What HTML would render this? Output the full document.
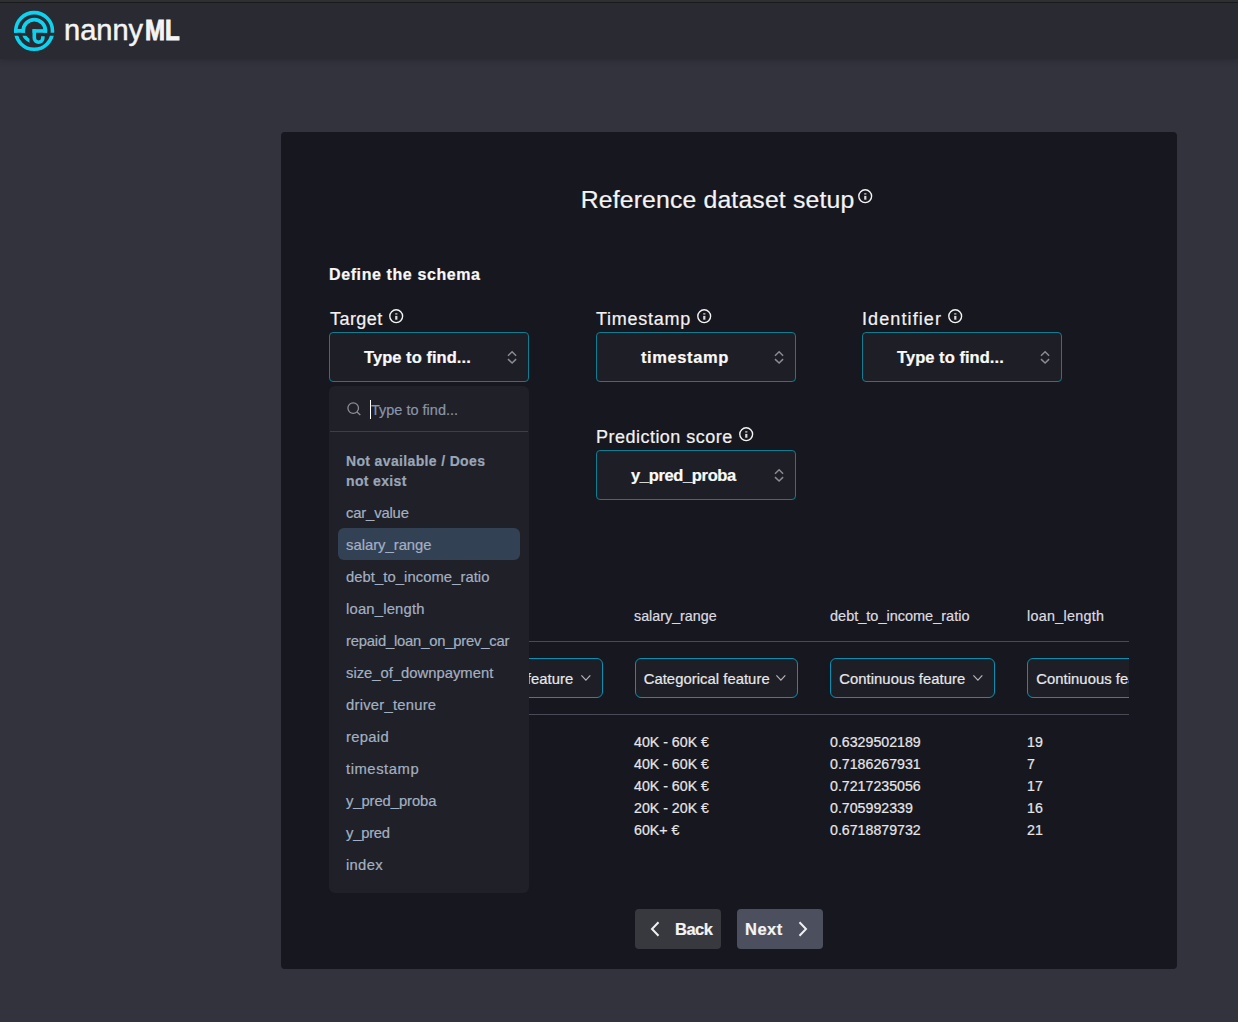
<!DOCTYPE html>
<html><head><meta charset="utf-8">
<style>
*{box-sizing:border-box;margin:0;padding:0}
html,body{width:1238px;height:1022px;overflow:hidden;background:#33333e;font-family:"Liberation Sans",sans-serif;}
.abs{position:absolute;white-space:nowrap;line-height:1;-webkit-text-stroke:0.2px currentColor}
#topstrip{position:absolute;left:0;top:0;width:1238px;height:3px;background:#2e3235;border-bottom:1px solid #1b1b1d}
#header{position:absolute;left:0;top:3px;width:1238px;height:56px;background:#2a2a33;box-shadow:0 2px 6px rgba(0,0,0,0.18)}
#card{position:absolute;left:281px;top:132px;width:896px;height:837px;background:#17171f;border-radius:4px}
.info{position:absolute;width:14px;height:14px}
.sel{position:absolute;width:200px;height:50px;border:1px solid #0f7d92;border-radius:4px;background:#1e1f26}
.hline{position:absolute;height:1px;background:#4a4a56}
.fsel{position:absolute;height:40px;border:1px solid #0891b2;border-radius:6px;background:#1e1f26;overflow:hidden}
#dd{position:absolute;left:329px;top:386px;width:200px;height:507px;background:#1f2028;border-radius:6px}
.btn{position:absolute;top:909px;height:40px;border-radius:4px}
</style></head>
<body>
<div id="topstrip"></div>
<div id="header">
<svg style="position:absolute;left:10px;top:5px" width="50" height="46" viewBox="0 0 1111 1022">
<defs>
<clipPath id="cu"><rect x="0" y="0" width="1111" height="550"/></clipPath>
<clipPath id="cl"><rect x="0" y="615" width="1111" height="500"/></clipPath>
<clipPath id="cd"><rect x="0" y="615" width="432" height="200"/></clipPath>
</defs>
<g fill="none" stroke="#0cd3ef" stroke-width="80">
<circle cx="536" cy="510" r="408" clip-path="url(#cu)"/>
<circle cx="536" cy="510" r="408" clip-path="url(#cl)"/>
<circle cx="540" cy="505" r="247" clip-path="url(#cu)"/>
<circle cx="540" cy="505" r="247" clip-path="url(#cd)"/>
<path d="M540 470 V665 A95 95 0 0 0 730 665 V625"/>
</g>
<g fill="#0cd3ef">
<rect x="88" y="465" width="242" height="85"/>
<rect x="500" y="470" width="325" height="80"/>
</g>
</svg>
<div class="abs" style="left:64px;top:12.5px;font-size:29px;color:#f4f4f4;-webkit-text-stroke:0.5px #f4f4f4">nanny<b style="display:inline-block;transform:scaleX(0.83);transform-origin:0 0;margin-left:2px;-webkit-text-stroke:0.9px #f4f4f4">ML</b></div>
</div>
<div id="card"></div>
<div class="abs" style="left:580.7px;top:187.92px;font-size:24.8px;color:#f4f4f4;font-weight:400;letter-spacing:0.15px;">Reference dataset setup</div>
<svg class="info" style="left:856.5px;top:187.7px;width:16px;height:16px" viewBox="0 0 16 16"><circle cx="8.2" cy="8.2" r="6.4" fill="none" stroke="#f4f4f4" stroke-width="1.4"/><rect x="7.2" y="5.3" width="2.2" height="1.2" fill="#dcdcdc"/><rect x="7.2" y="7.9" width="2.2" height="3.8" fill="#dcdcdc"/></svg>
<div class="abs" style="left:329px;top:267.40px;font-size:16px;color:#f8f8f8;font-weight:700;letter-spacing:0.6px;">Define the schema</div>
<div class="abs" style="left:330px;top:309.70px;font-size:18px;color:#f2f2f2;font-weight:400;letter-spacing:0.45px;">Target</div>
<svg class="info" style="left:387.6px;top:307.6px;width:16px;height:16px" viewBox="0 0 16 16"><circle cx="8.2" cy="8.2" r="6.4" fill="none" stroke="#f4f4f4" stroke-width="1.4"/><rect x="7.2" y="5.3" width="2.2" height="1.2" fill="#dcdcdc"/><rect x="7.2" y="7.9" width="2.2" height="3.8" fill="#dcdcdc"/></svg>
<div class="abs" style="left:596px;top:309.70px;font-size:18px;color:#f2f2f2;font-weight:400;letter-spacing:0.75px;">Timestamp</div>
<svg class="info" style="left:695.6px;top:307.6px;width:16px;height:16px" viewBox="0 0 16 16"><circle cx="8.2" cy="8.2" r="6.4" fill="none" stroke="#f4f4f4" stroke-width="1.4"/><rect x="7.2" y="5.3" width="2.2" height="1.2" fill="#dcdcdc"/><rect x="7.2" y="7.9" width="2.2" height="3.8" fill="#dcdcdc"/></svg>
<div class="abs" style="left:862px;top:309.70px;font-size:18px;color:#f2f2f2;font-weight:400;letter-spacing:1.1px;">Identifier</div>
<svg class="info" style="left:947.2px;top:307.6px;width:16px;height:16px" viewBox="0 0 16 16"><circle cx="8.2" cy="8.2" r="6.4" fill="none" stroke="#f4f4f4" stroke-width="1.4"/><rect x="7.2" y="5.3" width="2.2" height="1.2" fill="#dcdcdc"/><rect x="7.2" y="7.9" width="2.2" height="3.8" fill="#dcdcdc"/></svg>
<div class="abs" style="left:596px;top:427.70px;font-size:18px;color:#f2f2f2;font-weight:400;letter-spacing:0.48px;">Prediction score</div>
<svg class="info" style="left:737.9px;top:425.6px;width:16px;height:16px" viewBox="0 0 16 16"><circle cx="8.2" cy="8.2" r="6.4" fill="none" stroke="#f4f4f4" stroke-width="1.4"/><rect x="7.2" y="5.3" width="2.2" height="1.2" fill="#dcdcdc"/><rect x="7.2" y="7.9" width="2.2" height="3.8" fill="#dcdcdc"/></svg>
<div class="sel" style="left:329px;top:332px"></div>
<div class="abs" style="left:364px;top:348.98px;font-size:16.5px;color:#fafafa;font-weight:700;letter-spacing:0.05px;">Type to find...</div>
<svg style="position:absolute;left:505.6px;top:349.5px" width="13" height="16" viewBox="0 0 13 16"><g fill="none" stroke="#8b8b93" stroke-width="1.5"><path d="M2 5.7 L6.1 1.8 L10.1 5.7"/><path d="M2 9.1 L6.1 13 L10.1 9.1"/></g></svg>
<div class="sel" style="left:596px;top:332px"></div>
<div class="abs" style="left:641px;top:348.98px;font-size:16.5px;color:#fafafa;font-weight:700;letter-spacing:0.6px;">timestamp</div>
<svg style="position:absolute;left:772.6px;top:349.5px" width="13" height="16" viewBox="0 0 13 16"><g fill="none" stroke="#8b8b93" stroke-width="1.5"><path d="M2 5.7 L6.1 1.8 L10.1 5.7"/><path d="M2 9.1 L6.1 13 L10.1 9.1"/></g></svg>
<div class="sel" style="left:862px;top:332px"></div>
<div class="abs" style="left:897px;top:348.98px;font-size:16.5px;color:#fafafa;font-weight:700;letter-spacing:0.05px;">Type to find...</div>
<svg style="position:absolute;left:1038.6px;top:349.5px" width="13" height="16" viewBox="0 0 13 16"><g fill="none" stroke="#8b8b93" stroke-width="1.5"><path d="M2 5.7 L6.1 1.8 L10.1 5.7"/><path d="M2 9.1 L6.1 13 L10.1 9.1"/></g></svg>
<div class="sel" style="left:596px;top:450px"></div>
<div class="abs" style="left:631px;top:466.98px;font-size:16.5px;color:#fafafa;font-weight:700;letter-spacing:-0.35px;">y_pred_proba</div>
<svg style="position:absolute;left:772.6px;top:467.5px" width="13" height="16" viewBox="0 0 13 16"><g fill="none" stroke="#8b8b93" stroke-width="1.5"><path d="M2 5.7 L6.1 1.8 L10.1 5.7"/><path d="M2 9.1 L6.1 13 L10.1 9.1"/></g></svg>
<div class="hline" style="left:329px;top:641px;width:800px"></div>
<div class="hline" style="left:329px;top:714px;width:800px"></div>
<div class="abs" style="left:634px;top:609.05px;font-size:14.3px;color:#dcdce0;font-weight:400;letter-spacing:0px;">salary_range</div>
<div class="abs" style="left:830px;top:608.88px;font-size:14.5px;color:#dcdce0;font-weight:400;letter-spacing:0px;">debt_to_income_ratio</div>
<div class="abs" style="left:1027px;top:609.05px;font-size:14.3px;color:#dcdce0;font-weight:400;letter-spacing:0.3px;">loan_length</div>
<div style="position:absolute;left:329px;top:650px;width:800px;height:56px;overflow:hidden">
<div class="fsel" style="left:109px;top:8px;width:164.5px"></div>
<div class="abs" style="left:118.3px;top:21.62px;font-size:14.8px;color:#e8e8ea;font-weight:400;letter-spacing:0.05px;">Continuous feature</div>
<svg style="position:absolute;left:250.5px;top:24.3px" width="12" height="8" viewBox="0 0 12 8"><path d="M1.4 1.3 L5.9 6.1 L10.3 1.3" fill="none" stroke="#b4b4bc" stroke-width="1.2"/></svg>
<div class="fsel" style="left:306px;top:8px;width:163px"></div>
<div class="abs" style="left:314.7px;top:21.62px;font-size:14.8px;color:#e8e8ea;font-weight:400;letter-spacing:0.05px;">Categorical feature</div>
<svg style="position:absolute;left:446.0px;top:24.3px" width="12" height="8" viewBox="0 0 12 8"><path d="M1.4 1.3 L5.9 6.1 L10.3 1.3" fill="none" stroke="#b4b4bc" stroke-width="1.2"/></svg>
<div class="fsel" style="left:501px;top:8px;width:164.5px"></div>
<div class="abs" style="left:510.3px;top:21.62px;font-size:14.8px;color:#e8e8ea;font-weight:400;letter-spacing:0.05px;">Continuous feature</div>
<svg style="position:absolute;left:642.5px;top:24.3px" width="12" height="8" viewBox="0 0 12 8"><path d="M1.4 1.3 L5.9 6.1 L10.3 1.3" fill="none" stroke="#b4b4bc" stroke-width="1.2"/></svg>
<div class="fsel" style="left:698px;top:8px;width:164.5px"></div>
<div class="abs" style="left:707.3px;top:21.62px;font-size:14.8px;color:#e8e8ea;font-weight:400;letter-spacing:0.05px;">Continuous feature</div>
<svg style="position:absolute;left:839.5px;top:24.3px" width="12" height="8" viewBox="0 0 12 8"><path d="M1.4 1.3 L5.9 6.1 L10.3 1.3" fill="none" stroke="#b4b4bc" stroke-width="1.2"/></svg>
</div>
<div class="abs" style="left:634px;top:735.43px;font-size:14.2px;color:#e6e6e8;font-weight:400;letter-spacing:0px;">40K - 60K €</div>
<div class="abs" style="left:830px;top:735.43px;font-size:14.2px;color:#e6e6e8;font-weight:400;letter-spacing:0px;">0.6329502189</div>
<div class="abs" style="left:1027px;top:735.43px;font-size:14.2px;color:#e6e6e8;font-weight:400;letter-spacing:0px;">19</div>
<div class="abs" style="left:634px;top:757.33px;font-size:14.2px;color:#e6e6e8;font-weight:400;letter-spacing:0px;">40K - 60K €</div>
<div class="abs" style="left:830px;top:757.33px;font-size:14.2px;color:#e6e6e8;font-weight:400;letter-spacing:0px;">0.7186267931</div>
<div class="abs" style="left:1027px;top:757.33px;font-size:14.2px;color:#e6e6e8;font-weight:400;letter-spacing:0px;">7</div>
<div class="abs" style="left:634px;top:779.23px;font-size:14.2px;color:#e6e6e8;font-weight:400;letter-spacing:0px;">40K - 60K €</div>
<div class="abs" style="left:830px;top:779.23px;font-size:14.2px;color:#e6e6e8;font-weight:400;letter-spacing:0px;">0.7217235056</div>
<div class="abs" style="left:1027px;top:779.23px;font-size:14.2px;color:#e6e6e8;font-weight:400;letter-spacing:0px;">17</div>
<div class="abs" style="left:634px;top:801.13px;font-size:14.2px;color:#e6e6e8;font-weight:400;letter-spacing:0px;">20K - 20K €</div>
<div class="abs" style="left:830px;top:801.13px;font-size:14.2px;color:#e6e6e8;font-weight:400;letter-spacing:0px;">0.705992339</div>
<div class="abs" style="left:1027px;top:801.13px;font-size:14.2px;color:#e6e6e8;font-weight:400;letter-spacing:0px;">16</div>
<div class="abs" style="left:634px;top:823.03px;font-size:14.2px;color:#e6e6e8;font-weight:400;letter-spacing:0px;">60K+ €</div>
<div class="abs" style="left:830px;top:823.03px;font-size:14.2px;color:#e6e6e8;font-weight:400;letter-spacing:0px;">0.6718879732</div>
<div class="abs" style="left:1027px;top:823.03px;font-size:14.2px;color:#e6e6e8;font-weight:400;letter-spacing:0px;">21</div>
<div class="btn" style="left:635px;width:86px;background:#38383f"></div>
<svg style="position:absolute;left:649px;top:920px" width="12" height="18" viewBox="0 0 12 18"><path d="M9.5 2.2 L3 9 L9.5 15.8" fill="none" stroke="#f0f0f0" stroke-width="2"/></svg>
<div class="abs" style="left:675px;top:921.27px;font-size:16.5px;color:#f4f4f4;font-weight:700;letter-spacing:-0.5px;">Back</div>
<div class="btn" style="left:737px;width:86px;background:#4b4f5e"></div>
<div class="abs" style="left:745px;top:921.27px;font-size:16.5px;color:#f4f4f4;font-weight:700;letter-spacing:0.5px;">Next</div>
<svg style="position:absolute;left:797px;top:920px" width="12" height="18" viewBox="0 0 12 18"><path d="M2.5 2.2 L9 9 L2.5 15.8" fill="none" stroke="#f0f0f0" stroke-width="2"/></svg>
<div id="dd">
<svg style="position:absolute;left:18px;top:15px" width="16" height="16" viewBox="0 0 16 16"><circle cx="6.2" cy="7.1" r="5.3" fill="none" stroke="#8e8e94" stroke-width="1.3"/><path d="M10 11 L13.3 14" stroke="#8e8e94" stroke-width="1.3"/></svg>
<div style="position:absolute;left:40.5px;top:14px;width:1.3px;height:19px;background:#fff"></div>
<div class="abs" style="left:42px;top:16.98px;font-size:14.5px;color:#8a95a8;font-weight:400;letter-spacing:0px;">Type to find...</div>
<div style="position:absolute;left:1px;top:45px;width:198px;height:1px;background:#334155"></div>
<div class="abs" style="left:17px;top:67.80px;font-size:14px;color:#9aa6b8;font-weight:700;letter-spacing:0.35px;">Not available / Does</div>
<div class="abs" style="left:17px;top:87.60px;font-size:14px;color:#9aa6b8;font-weight:700;letter-spacing:0.35px;">not exist</div>
<div style="position:absolute;left:9px;top:142px;width:182px;height:32px;background:#334155;border-radius:6px"></div>
<div class="abs" style="left:17px;top:119.52px;font-size:14.8px;color:#a3b0c2;font-weight:400;letter-spacing:-0.16px;">car_value</div>
<div class="abs" style="left:17px;top:151.52px;font-size:14.8px;color:#a3b0c2;font-weight:400;letter-spacing:0px;">salary_range</div>
<div class="abs" style="left:17px;top:183.52px;font-size:14.8px;color:#a3b0c2;font-weight:400;letter-spacing:0.06px;">debt_to_income_ratio</div>
<div class="abs" style="left:17px;top:215.52px;font-size:14.8px;color:#a3b0c2;font-weight:400;letter-spacing:0.2px;">loan_length</div>
<div class="abs" style="left:17px;top:247.52px;font-size:14.8px;color:#a3b0c2;font-weight:400;letter-spacing:-0.2px;">repaid_loan_on_prev_car</div>
<div class="abs" style="left:17px;top:279.52px;font-size:14.8px;color:#a3b0c2;font-weight:400;letter-spacing:0px;">size_of_downpayment</div>
<div class="abs" style="left:17px;top:311.52px;font-size:14.8px;color:#a3b0c2;font-weight:400;letter-spacing:0.24px;">driver_tenure</div>
<div class="abs" style="left:17px;top:343.52px;font-size:14.8px;color:#a3b0c2;font-weight:400;letter-spacing:0.3px;">repaid</div>
<div class="abs" style="left:17px;top:375.52px;font-size:14.8px;color:#a3b0c2;font-weight:400;letter-spacing:0.55px;">timestamp</div>
<div class="abs" style="left:17px;top:407.52px;font-size:14.8px;color:#a3b0c2;font-weight:400;letter-spacing:-0.08px;">y_pred_proba</div>
<div class="abs" style="left:17px;top:439.52px;font-size:14.8px;color:#a3b0c2;font-weight:400;letter-spacing:-0.23px;">y_pred</div>
<div class="abs" style="left:17px;top:471.52px;font-size:14.8px;color:#a3b0c2;font-weight:400;letter-spacing:0.3px;">index</div>
</div>
</body></html>
